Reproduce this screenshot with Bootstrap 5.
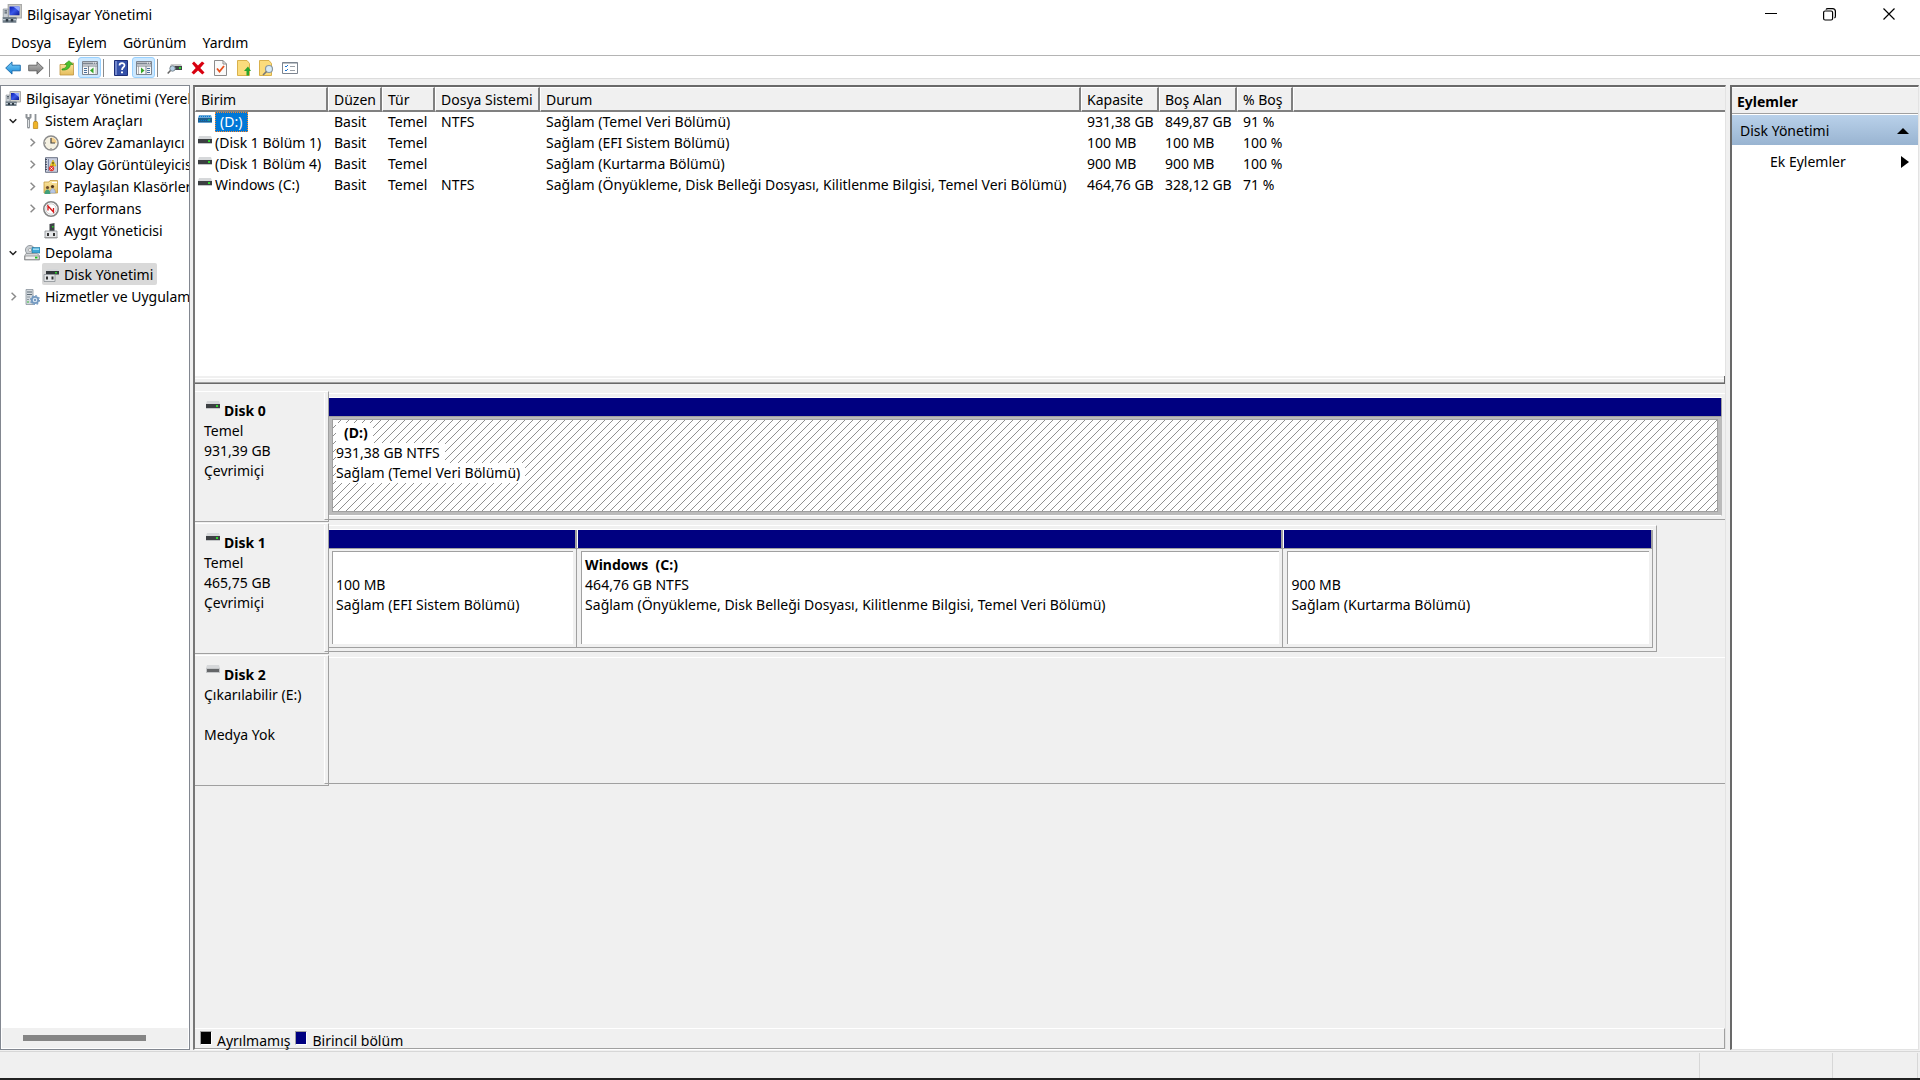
<!DOCTYPE html>
<html lang="tr">
<head>
<meta charset="utf-8">
<meta name="viewport" content="width=device-width, initial-scale=1">
<title>Bilgisayar Yönetimi</title>
<link href="https://cdn.jsdelivr.net/npm/bootstrap@5.3.0/dist/css/bootstrap.min.css" rel="stylesheet">
<style>
:root{--face:#f0f0f0;--shade:#a0a0a0;--dark:#696969;--lite:#e3e3e3;--navy:#000080}
body{font-family:"Noto Sans","Open Sans",sans-serif;font-size:14px;line-height:20px;color:#000;background:var(--face);cursor:default}
button{font:inherit;color:inherit;background:none;border:0;padding:0}
svg{display:block;flex:none}
.titlebar{height:28px;padding:0 2px}
.titlebar span{padding:2px 0 0 5px}
.win-btn{width:59px;height:28px}
.menubar{height:28px;padding:0 3px;border-bottom:1px solid #b4b4b4}
.menubar button{padding:2px 8px 0}
.toolbar{height:23px;padding:1px 0 0 1px;border-bottom:1px solid #dcdcdc}
.tool{width:23px;height:21px;display:flex;align-items:center;justify-content:center}
.tool.pressed{background:#cce8ff;border:1px solid #99d1ff;border-radius:3px}
.tool-sep{width:8px;height:18px}
.tool-sep::before{content:"";display:block;width:1px;height:100%;margin-left:2px;background:#8a8a8a}
.workspace{padding-top:6px}
.tree-pane{width:190px;border:1px solid #828790;background:#fff;margin-right:3px}
.tree-view{padding:1px 1px 0 0}
.tree-row{height:22px;white-space:nowrap}
.tree-row .node{flex:none;height:22px;display:flex;align-items:center;padding:2px 4px 0 1px}
.tree-row .node svg{margin-right:5px}
.lvl-0{padding-left:3px}
.lvl-1{padding-left:2px}
.lvl-2{padding-left:21px}
.twisty{flex:none;width:20px;height:22px;display:flex;align-items:center;justify-content:center;padding-top:1px}
.node.selected{background:#d9d9d9;border-radius:2px}
.hscroll{height:20px;margin:0 1px 1px;background:var(--face);padding:7px 42px 0 21px}
.hscroll div{height:6px;width:100%;background:#858585}
.main-pane{border:solid;border-width:2px 1px 1px 2px;border-color:var(--dark) var(--lite) #fff #777;margin-right:4px}
.vol-list{height:289px;background:#fff}
.vol-table{table-layout:fixed;width:100%;border-collapse:separate;border-spacing:0;white-space:nowrap}
.vol-table th{height:24px;padding:2px 0 0 5px;font-weight:400;background:var(--face);border:solid;border-width:1px 2px 2px 1px;border-color:#fff #808080 #808080 #fff}
.vol-table th:last-child{border-right:0}
.vol-table td{height:21px;padding:0 0 0 6px;vertical-align:top}
.vol-table td:first-child{padding-left:3px}
.vol-name{display:flex;align-items:center;height:20px}
.vol-name svg{margin:0 3px 6px 0}
.vol-name.selected span{background:#0078d7;color:#fff;outline:1px dotted #ff8728;outline-offset:-1px;padding:0 6px 0 5px}
.splitbar{height:8px;background:var(--face);border-bottom:1px solid var(--dark);border-right:1px solid var(--dark);padding-top:2px}
.splitbar div{height:5px;border-top:1px solid #fff;border-bottom:1px solid var(--shade)}
.disk-map{padding-top:7px}
.disk-row{height:131px;margin-bottom:1px}
.disk-label{width:134px;border-top:1px solid #fff;border-bottom:1px solid var(--shade);border-right:1px solid var(--shade);padding-left:9px}
.disk-label .facts{padding-top:9px}
.disk-label .facts b svg{margin:0 4px 0 2px}
.notch{width:4px;margin:1px 0;border-left:1px solid #fff;border-bottom:1px solid var(--shade)}
.track{margin:2px 0;padding:3px 3px 3px 0;border-top:1px solid #fff;border-bottom:1px solid var(--shade);display:flex}
.track.boxed{border-right:1px solid var(--shade)}
.part{display:flex;flex-direction:column;border-top:1px solid #fff;min-width:0}
.part .stripe{height:18px;background:var(--navy);border-right:2px solid var(--shade)}
.part+.part .stripe{border-left:1px solid #fff}
.part .frame{flex:1;display:flex;border:solid var(--shade);border-width:1px 1px 1px 0;padding:2px 3px 3px}
.part+.part .frame{padding-left:4px}
.part .inside{flex:1;background:#fff;border:solid var(--shade);border-width:1px 0 0 1px;padding:3px 3px 0;white-space:nowrap;overflow:hidden}
.part .inside div{height:20px}
.part.active .stripe{border-right-width:1px}
.part.active .frame{background:#bbb;border-right-color:#bbb;border-bottom-color:#fff}
.part.active .inside{border-width:1px;background:#fff url("data:image/svg+xml,%3Csvg xmlns='http://www.w3.org/2000/svg' width='8' height='8' shape-rendering='crispEdges'%3E%3Cpath d='M7 0h1v1h-1zM6 1h1v1h-1zM5 2h1v1h-1zM4 3h1v1h-1zM3 4h1v1h-1zM2 5h1v1h-1zM1 6h1v1h-1zM0 7h1v1h-1z' fill='%23909090'/%3E%3C/svg%3E")}
.part.active .inside span{display:inline-block;background:#fff;padding-right:5px}
.legend-bar{height:21px;border-top:1px solid #fff;border-bottom:1px solid var(--shade);border-right:1px solid var(--shade);padding-left:5px}
.swatch{width:12px;height:14px;border:1px solid #fff;border-top-color:var(--shade);border-left-color:var(--shade);margin:2px 5px 0 0}
.legend-bar span{margin-right:5px;padding-top:2px;line-height:19px}
.action-pane{width:189px;margin-right:1px;background:#fff;border:solid;border-width:2px 1px 1px 2px;border-color:var(--dark) var(--lite) var(--lite) var(--dark)}
.action-title{height:27px;padding:4px 5px 0;background:var(--face);border-top:1px solid #fff;border-bottom:1px solid var(--shade);font-size:14px;line-height:20px;font-weight:700;margin:0 0 1px}
.action-group{height:30px;padding:2px 9px 0 8px;background:linear-gradient(#b9d1ea,#99b4d1)}
.action-item{height:32px;padding:2px 9px 0 38px}
.statusbar{height:27px;margin-top:1px;border-top:1px solid #d7d7d7;padding-right:2px}
.statusbar div{border-right:1px solid #d7d7d7;margin-top:1px}
.window-edge{height:2px;background:#222}
</style>
</head>
<body class="vh-100 d-flex flex-column overflow-hidden">
<svg width="0" height="0" class="position-absolute" aria-hidden="true">
<defs>
<linearGradient id="gBlue" x1="0" y1="0" x2="1" y2="1"><stop offset="0" stop-color="#0a1cb0"/><stop offset=".5" stop-color="#3a58e8"/><stop offset="1" stop-color="#0b1890"/></linearGradient>
<linearGradient id="gArrow" x1="0" y1="0" x2="0" y2="1"><stop offset="0" stop-color="#7fd0f8"/><stop offset="1" stop-color="#1486d8"/></linearGradient>
<linearGradient id="gGrey" x1="0" y1="0" x2="0" y2="1"><stop offset="0" stop-color="#bbb"/><stop offset="1" stop-color="#777"/></linearGradient>
<linearGradient id="gFold" x1="0" y1="0" x2="0" y2="1"><stop offset="0" stop-color="#fbe7a3"/><stop offset="1" stop-color="#e5bd5c"/></linearGradient>
<symbol id="i-pc" viewBox="0 0 16 16"><path d="M5 .5h10.500v10.500H5z" fill="#d4d4cc" stroke="#aaa"/><path d="M6 2h8v7H6z" fill="url(#gBlue)"/><path d="M9 2l5 4V2z" fill="#8fa6ff"/><path d="M1 4h4v7H1z" fill="#c9cfd4" stroke="#8b9298" stroke-width=".6"/><path d="M2 5.500h2M2 7h2" stroke="#56616b"/><path d="M7 11h5v1.500H7z" fill="#8b9298"/><path d="M.5 10.500h11v4.500H.5z" fill="#6f7d88"/><path d="M.5 12.500h11" stroke="#c5ced5"/><path d="M3 12h2v2H3zM7 12h2v2H7z" fill="#2f3a44"/></symbol>
<symbol id="i-tools" viewBox="0 0 16 16"><path d="M4.500 6.500v7.500" stroke="#8d9296" stroke-width="3" stroke-linecap="round"/><path d="M4.500 7v7" stroke="#e2e5e7" stroke-width="1.200"/><path d="M2.500 1v3.200c0 1 4 1 4 0V1" fill="none" stroke="#8d9296" stroke-width="2"/><path d="M11.500 1v8" stroke="#8d9296" stroke-width="1.800"/><path d="M10 8.500h3l.7 1.500v5.500H9.400V10z" fill="#efb428" stroke="#b98212" stroke-width=".7"/></symbol>
<symbol id="i-clock" viewBox="0 0 16 16"><circle cx="8" cy="8" r="7.100" fill="#f5f1e2" stroke="#8c8c8c" stroke-width="1.500"/><path d="M8 8V2.500A5.500 5.500 0 0 1 13.500 8z" fill="#f4cf8b"/><path d="M8 3v5h4" fill="none" stroke="#444" stroke-width="1.200"/><path d="M8 13v.8M3 8h-.8" stroke="#555"/></symbol>
<symbol id="i-event" viewBox="0 0 16 16"><path d="M2.500.7h12v14.600h-12z" fill="#c8cede" stroke="#6a7286"/><path d="M2 2.500h2M2 5h2M2 7.500h2M2 10h2M2 12.500h2" stroke="#404858"/><path d="M5.500 2v12" stroke="#7d88a8"/><path d="M7 9l3-6 3 6z" fill="#fddc2e" stroke="#c29b00" stroke-width=".5"/><path d="M10 5v2M10 7.500v1" stroke="#000" stroke-width=".9"/><circle cx="8.500" cy="11.500" r="2.700" fill="#e33b32"/><path d="M7.500 10.500l2 2m0-2l-2 2" stroke="#fff" stroke-width=".9"/></symbol>
<symbol id="i-share" viewBox="0 0 16 16"><path d="M1 3h5l1-1.500h7.500V14H1z" fill="url(#gFold)" stroke="#c49a3f" stroke-width=".8"/><path d="M9 3h5v1H9z" fill="#fff"/><circle cx="4.500" cy="8.500" r="1.600" fill="#6d4b2b"/><circle cx="9.500" cy="7.500" r="1.600" fill="#4d3219"/><path d="M1.500 15c0-6 6-6 6 0z" fill="#42a07a"/><path d="M7 14c0-6 5.500-6 5.500 0z" fill="#b7c8e4" stroke="#7486a8" stroke-width=".4"/></symbol>
<symbol id="i-perf" viewBox="0 0 16 16"><circle cx="8" cy="8" r="7.200" fill="#fff" stroke="#858585" stroke-width="1.600"/><circle cx="8" cy="8" r="5.200" fill="none" stroke="#b9b9b9" stroke-width=".7"/><path d="M5 9.500V5l5.500 6V7" fill="none" stroke="#d51a1a" stroke-width="1.300"/><path d="M4.500 4.500l3 3" stroke="#d51a1a"/></symbol>
<symbol id="i-device" viewBox="0 0 16 16"><path d="M6.500 1l5-1v9h-5z" fill="#3e4246"/><path d="M9 3h1.500v1.500H9z" fill="#2bd12b"/><path d="M2 8h12v7H2z" fill="#e4e6e8" stroke="#8a8f94" stroke-width=".8"/><path d="M4 10h2v3H4zM10 10h2v3h-2z" fill="#333"/><path d="M1.500 14.500h13" stroke="#999"/></symbol>
<symbol id="i-storage" viewBox="0 0 16 16"><circle cx="6" cy="5" r="4.600" fill="#c9ced2" stroke="#878d92" stroke-width=".8"/><circle cx="6" cy="5" r="1.500" fill="#fff" stroke="#888" stroke-width=".6"/><path d="M8 2.500h8v5.500H8z" fill="#41a8d8" stroke="#1d6e99" stroke-width=".6"/><path d="M9 3.500h6v1.500H9z" fill="#a0dcf3"/><path d="M2 8.500h11l2.500 2v4.500H.5v-4z" fill="#d5d8da" stroke="#85898d" stroke-width=".7"/><path d="M1 11h14v3.500H1z" fill="#f0f0f0" stroke="#777" stroke-width=".6"/><path d="M11 11.700h2.500v1.800H11z" fill="#1fc01f"/></symbol>
<symbol id="i-diskmg" viewBox="0 0 16 16"><path d="M4 2h11l1 2H3z" fill="#d4d6d8"/><path d="M3 4h13v3.500H3z" fill="#33373a"/><path d="M12 5h2v1.500h-2z" fill="#2bd12b"/><path d="M1 7.500h11v7H1z" fill="#e4e6e8" stroke="#8a8f94" stroke-width=".8"/><path d="M3 9.500h2v3H3zM8.500 9.500h2v3h-2z" fill="#333"/></symbol>
<symbol id="i-services" viewBox="0 0 16 16"><path d="M2 .5h7v15H2z" fill="#d3d9de" stroke="#8a949d" stroke-width=".8"/><path d="M3 3h5M3 5.500h5" stroke="#5f6c77"/><path d="M3 8h3M3 10.500h2" stroke="#8a949d"/><path d="M3 12.500h2v1H3z" fill="#3bbb3b"/><circle cx="11" cy="11" r="3.200" fill="#dfeaf5" stroke="#7399c0" stroke-width="1.800"/><circle cx="11" cy="11" r="4.500" fill="none" stroke="#7399c0" stroke-width="1.200" stroke-dasharray="1.700 1.800"/><circle cx="11" cy="11" r="1.200" fill="#7399c0"/></symbol>
<symbol id="i-drive" viewBox="0 0 14 8"><path d="M1 0h12l1 3H0z" fill="#d6d8da"/><path d="M0 3h14v4H0z" fill="#3c3f42"/><path d="M0 7h14v1H0z" fill="#c4c6c8"/><path d="M10 4h2v2h-2z" fill="#2fd62f"/></symbol>
<symbol id="i-drive-sel" viewBox="0 0 14 8"><path d="M1 0h12l1 3H0z" fill="#6ba8d7"/><path d="M0 3h14v4H0z" fill="#1e5c8b"/><path d="M0 7h14v1H0z" fill="#62a0d0"/><path d="M10 4h2v2h-2z" fill="#18a584"/><path d="M1 1.500h12M1 5.500h9" stroke="#0078d7" stroke-dasharray="1 1"/></symbol>
<symbol id="i-removable" viewBox="0 0 14 8"><path d="M1 0h12l1 3H0z" fill="#d6d8da"/><path d="M0 3h14v5H0z" fill="#c4c6c8"/><path d="M1 4h12v3H1z" fill="#646668"/></symbol>
<symbol id="c-down" viewBox="0 0 8 8"><path d="M.7 2.200L4 5.500l3.300-3.300" fill="none" stroke="#222" stroke-width="1.500"/></symbol>
<symbol id="c-right" viewBox="0 0 8 8"><path d="M2.300.6L5.800 4 2.300 7.400" fill="none" stroke="#8a8a8a" stroke-width="1.300"/></symbol>
</defs>
</svg>

<header class="bg-white">
  <div class="titlebar d-flex align-items-center">
    <svg width="20" height="20"><use href="#i-pc"/></svg>
    <span class="me-auto">Bilgisayar Yönetimi</span>
    <button class="win-btn" aria-label="Simge durumuna küçült"><svg class="mx-auto" width="12" height="12"><path d="M0 5.500h12" stroke="#000"/></svg></button>
    <button class="win-btn" aria-label="Önceki boyut"><svg class="mx-auto" width="13" height="13" fill="none" stroke="#000" stroke-width="1.200"><rect x=".6" y="3" width="9" height="9" rx="1.500"/><path d="M3 1.600Q3.300.6 5 .6h4.500q2.900 0 2.900 2.900V8q0 1.600-1 2"/></svg></button>
    <button class="win-btn" aria-label="Kapat"><svg class="mx-auto" width="12" height="12"><path d="M.5.5l11 11m0-11l-11 11" stroke="#000" stroke-width="1.200"/></svg></button>
  </div>
  <nav class="menubar d-flex align-items-center" aria-label="Menü">
    <button>Dosya</button><button>Eylem</button><button>Görünüm</button><button>Yardım</button>
  </nav>
  <div class="toolbar d-flex align-items-center" role="toolbar">
    <button class="tool" aria-label="Geri"><svg width="16" height="14"><path d="M.7 7L7 .9v3.300h8.300v5.600H7v3.300z" fill="url(#gArrow)" stroke="#1466a8" stroke-width=".9"/></svg></button>
    <button class="tool" aria-label="İleri"><svg width="16" height="14"><path d="M15.300 7L9 .9v3.300H.7v5.600H9v3.300z" fill="url(#gGrey)" stroke="#5d5d5d" stroke-width=".9"/></svg></button>
    <span class="tool-sep"></span>
    <button class="tool" aria-label="Yukarı"><svg width="16" height="16"><path d="M1 4.500h5l1-1.500h7.500v12H1z" fill="url(#gFold)" stroke="#bf9440" stroke-width=".8"/><path d="M3 9c3.500-.5 4.500-2 4.800-4.500H5.700L10 .7l4 3.800h-2.600C11 8 8 10.500 3 10z" fill="#49c22f" stroke="#268a14" stroke-width=".6"/></svg></button>
    <button class="tool pressed" aria-label="Konsol ağacını göster"><svg width="16" height="14"><path d="M.5.500h15v13H.5z" fill="#f7f7f7" stroke="#7d8590"/><path d="M1 2.500h14" stroke="#7d8590" stroke-width="2"/><path d="M11 2h1m1 0h1" stroke="#fff"/><path d="M1 5h14M6.500 5v8.500" stroke="#7d8590"/><path d="M2 7.500h3M2 9.500h3M2 11.500h3" stroke="#4b6f9c"/><path d="M11.500 6.500v6L8 9.500z" fill="#35a526"/><path d="M14 5v8" stroke="#999" stroke-width=".7"/></svg></button>
    <span class="tool-sep"></span>
    <button class="tool" aria-label="Yardım"><svg width="14" height="16"><path d="M.5.500h13v15H.5z" fill="#3450a8" stroke="#1d2e78"/><path d="M1 1h2v14H1z" fill="#7388cc"/><path d="M5.500 5.500c0-3 5-3 5-.3C10.500 7.500 8 7 8 10" fill="none" stroke="#fff" stroke-width="1.700"/><path d="M7 11.500h2v1.800H7z" fill="#fff"/></svg></button>
    <button class="tool pressed" aria-label="Eylem bölmesini göster"><svg width="16" height="14"><path d="M.5.500h15v13H.5z" fill="#f7f7f7" stroke="#7d8590"/><path d="M1 2.500h14" stroke="#7d8590" stroke-width="2"/><path d="M11 2h1m1 0h1" stroke="#fff"/><path d="M1 5h14M10 5v8.500" stroke="#7d8590"/><path d="M11 7.500h3M11 9.500h3M11 11.500h3" stroke="#4b6f9c"/><path d="M5 6.500v6l3.500-3z" fill="#35a526"/><path d="M2.500 5v8" stroke="#999" stroke-width=".7"/></svg></button>
    <span class="tool-sep"></span>
    <button class="tool" aria-label="Bağlan"><svg width="15" height="14"><path d="M4 3h10l1 2H3z" fill="#ccc"/><path d="M3 5h12v4H3z" fill="#404448"/><path d="M12 6h2v2h-2z" fill="#2fd62f"/><circle cx="5.500" cy="7.500" r="2.700" fill="#b6d0e5" stroke="#7b8790"/><path d="M3.500 9.500L.7 12.500" stroke="#666" stroke-width="1.600"/></svg></button>
    <button class="tool" aria-label="Sil"><svg width="14" height="14"><path d="M1 2.500L3 .5l4 4 4-4 2.500 1.800L9.300 7l4.200 4.500-2.200 2L7 9.500l-4.200 4-2.300-2L4.700 7z" fill="#d8000f"/></svg></button>
    <button class="tool" aria-label="Özellikler"><svg width="13" height="16"><path d="M.5.500h8.500l3.500 3.500v11.500H.5z" fill="#fafafa" stroke="#8b8b8b"/><path d="M9 .5V4h3.500" fill="none" stroke="#8b8b8b"/><path d="M3 8.500l2.500 3L10 6" fill="none" stroke="#e8501c" stroke-width="1.800"/></svg></button>
    <button class="tool" aria-label="Yeni"><svg width="14" height="16"><path d="M.5.500h9.500l2.500 3v12H.5z" fill="#fbdc7c" stroke="#d9b14c"/><path d="M9.500 15.500V11H7l4-4.500 3 4.500h-2v4.500z" fill="#2aa52a"/></svg></button>
    <button class="tool" aria-label="Bul"><svg width="15" height="16"><path d="M.5.500h9.500l2.500 3v12H.5z" fill="#fbdc7c" stroke="#d9b14c"/><circle cx="10" cy="9" r="3.500" fill="#d7ebf8" stroke="#8a979f" stroke-width="1.200"/><path d="M7.500 11.500L4 15" stroke="#777" stroke-width="1.600"/></svg></button>
    <button class="tool" aria-label="Liste"><svg width="16" height="12"><path d="M.5.500h15v11H.5z" fill="#fff" stroke="#7d8590"/><path d="M.5 1h15" stroke="#7d8590"/><path d="M3 4l1 1 2-2M3 8l1 1 2-2" fill="none" stroke="#1c74d0"/><path d="M8 4.500h5M8 8.500h5" stroke="#9aa0a8"/></svg></button>
  </div>
</header>

<main class="workspace d-flex flex-grow-1 overflow-hidden">
  <aside class="tree-pane d-flex flex-column flex-shrink-0">
    <div class="tree-view flex-grow-1 overflow-hidden">
      <div class="tree-row lvl-0 d-flex"><button class="node"><svg width="16" height="16"><use href="#i-pc"/></svg>Bilgisayar Yönetimi (Yerel)</button></div>
      <div class="tree-row lvl-1 d-flex"><button class="twisty" aria-label="Daralt"><svg width="8" height="8"><use href="#c-down"/></svg></button><button class="node"><svg width="16" height="16"><use href="#i-tools"/></svg>Sistem Araçları</button></div>
      <div class="tree-row lvl-2 d-flex"><button class="twisty" aria-label="Genişlet"><svg width="9" height="9"><use href="#c-right"/></svg></button><button class="node"><svg width="16" height="16"><use href="#i-clock"/></svg>Görev Zamanlayıcı</button></div>
      <div class="tree-row lvl-2 d-flex"><button class="twisty" aria-label="Genişlet"><svg width="9" height="9"><use href="#c-right"/></svg></button><button class="node"><svg width="16" height="16"><use href="#i-event"/></svg>Olay Görüntüleyicisi</button></div>
      <div class="tree-row lvl-2 d-flex"><button class="twisty" aria-label="Genişlet"><svg width="9" height="9"><use href="#c-right"/></svg></button><button class="node"><svg width="16" height="16"><use href="#i-share"/></svg>Paylaşılan Klasörler</button></div>
      <div class="tree-row lvl-2 d-flex"><button class="twisty" aria-label="Genişlet"><svg width="9" height="9"><use href="#c-right"/></svg></button><button class="node"><svg width="16" height="16"><use href="#i-perf"/></svg>Performans</button></div>
      <div class="tree-row lvl-2 d-flex"><span class="twisty"></span><button class="node"><svg width="16" height="16"><use href="#i-device"/></svg>Aygıt Yöneticisi</button></div>
      <div class="tree-row lvl-1 d-flex"><button class="twisty" aria-label="Daralt"><svg width="8" height="8"><use href="#c-down"/></svg></button><button class="node"><svg width="16" height="16"><use href="#i-storage"/></svg>Depolama</button></div>
      <div class="tree-row lvl-2 d-flex"><span class="twisty"></span><button class="node selected"><svg width="16" height="16"><use href="#i-diskmg"/></svg>Disk Yönetimi</button></div>
      <div class="tree-row lvl-1 d-flex"><button class="twisty" aria-label="Genişlet"><svg width="9" height="9"><use href="#c-right"/></svg></button><button class="node"><svg width="16" height="16"><use href="#i-services"/></svg>Hizmetler ve Uygulamalar</button></div>
    </div>
    <div class="hscroll"><div></div></div>
  </aside>

  <section class="main-pane d-flex flex-column flex-grow-1">
    <div class="vol-list flex-shrink-0 overflow-hidden">
      <table class="vol-table">
        <colgroup><col style="width:133px"><col style="width:54px"><col style="width:53px"><col style="width:105px"><col style="width:541px"><col style="width:78px"><col style="width:78px"><col style="width:56px"><col></colgroup>
        <thead><tr><th>Birim</th><th>Düzen</th><th>Tür</th><th>Dosya Sistemi</th><th>Durum</th><th>Kapasite</th><th>Boş Alan</th><th>% Boş</th><th></th></tr></thead>
        <tbody>
          <tr><td><div class="vol-name selected"><svg width="14" height="8"><use href="#i-drive-sel"/></svg><span>(D:)</span></div></td><td>Basit</td><td>Temel</td><td>NTFS</td><td>Sağlam (Temel Veri Bölümü)</td><td>931,38 GB</td><td>849,87 GB</td><td>91 %</td><td></td></tr>
          <tr><td><div class="vol-name"><svg width="14" height="8"><use href="#i-drive"/></svg><span>(Disk 1 Bölüm 1)</span></div></td><td>Basit</td><td>Temel</td><td></td><td>Sağlam (EFI Sistem Bölümü)</td><td>100 MB</td><td>100 MB</td><td>100 %</td><td></td></tr>
          <tr><td><div class="vol-name"><svg width="14" height="8"><use href="#i-drive"/></svg><span>(Disk 1 Bölüm 4)</span></div></td><td>Basit</td><td>Temel</td><td></td><td>Sağlam (Kurtarma Bölümü)</td><td>900 MB</td><td>900 MB</td><td>100 %</td><td></td></tr>
          <tr><td><div class="vol-name"><svg width="14" height="8"><use href="#i-drive"/></svg><span>Windows (C:)</span></div></td><td>Basit</td><td>Temel</td><td>NTFS</td><td>Sağlam (Önyükleme, Disk Belleği Dosyası, Kilitlenme Bilgisi, Temel Veri Bölümü)</td><td>464,76 GB</td><td>328,12 GB</td><td>71 %</td><td></td></tr>
        </tbody>
      </table>
    </div>
    <div class="splitbar flex-shrink-0"><div></div></div>
    <div class="disk-map flex-grow-1 overflow-hidden">
      <div class="disk-row d-flex">
        <div class="disk-label d-flex flex-shrink-0">
          <div class="facts flex-grow-1"><b class="d-flex align-items-start"><svg width="14" height="8"><use href="#i-drive"/></svg>Disk 0</b><div>Temel</div><div>931,39 GB</div><div>Çevrimiçi</div></div>
          <div class="notch"></div>
        </div>
        <div class="track flex-grow-1">
          <div class="part active flex-grow-1"><div class="stripe"></div><div class="frame"><div class="inside">
            <div><span class="fw-bold ps-2">(D:)</span></div><div><span>931,38 GB NTFS</span></div><div><span>Sağlam (Temel Veri Bölümü)</span></div>
          </div></div></div>
        </div>
      </div>
      <div class="disk-row d-flex">
        <div class="disk-label d-flex flex-shrink-0">
          <div class="facts flex-grow-1"><b class="d-flex align-items-start"><svg width="14" height="8"><use href="#i-drive"/></svg>Disk 1</b><div>Temel</div><div>465,75 GB</div><div>Çevrimiçi</div></div>
          <div class="notch"></div>
        </div>
        <div class="flex-grow-1 d-flex">
          <div class="track boxed" style="width:95.1%">
            <div class="part" style="flex:248 1 0"><div class="stripe"></div><div class="frame"><div class="inside">
              <div></div><div>100 MB</div><div>Sağlam (EFI Sistem Bölümü)</div>
            </div></div></div>
            <div class="part" style="flex:706 1 0"><div class="stripe"></div><div class="frame"><div class="inside">
              <div class="fw-bold">Windows&nbsp; (C:)</div><div>464,76 GB NTFS</div><div>Sağlam (Önyükleme, Disk Belleği Dosyası, Kilitlenme Bilgisi, Temel Veri Bölümü)</div>
            </div></div></div>
            <div class="part" style="flex:369 1 0"><div class="stripe"></div><div class="frame"><div class="inside">
              <div></div><div>900 MB</div><div>Sağlam (Kurtarma Bölümü)</div>
            </div></div></div>
          </div>
        </div>
      </div>
      <div class="disk-row d-flex">
        <div class="disk-label d-flex flex-shrink-0">
          <div class="facts flex-grow-1"><b class="d-flex align-items-start"><svg width="14" height="8"><use href="#i-removable"/></svg>Disk 2</b><div>Çıkarılabilir (E:)</div><div>&nbsp;</div><div>Medya Yok</div></div>
          <div class="notch"></div>
        </div>
        <div class="track flex-grow-1"></div>
      </div>
    </div>
    <div class="legend-bar d-flex flex-shrink-0">
      <i class="swatch" style="background:#000"></i><span>Ayrılmamış</span>
      <i class="swatch" style="background:#000080"></i><span>Birincil bölüm</span>
    </div>
  </section>

  <aside class="action-pane flex-shrink-0">
    <h2 class="action-title">Eylemler</h2>
    <button class="action-group d-flex align-items-center justify-content-between w-100">Disk Yönetimi<svg width="12" height="6"><path d="M0 6L6 0l6 6z"/></svg></button>
    <button class="action-item d-flex align-items-center justify-content-between w-100">Ek Eylemler<svg width="8" height="12"><path d="M0 0l8 6-8 6z"/></svg></button>
  </aside>
</main>

<footer>
  <div class="statusbar d-flex"><div class="flex-grow-1"></div><div style="width:133px"></div><div style="width:85px"></div></div>
  <div class="window-edge"></div>
</footer>
</body>
</html>
